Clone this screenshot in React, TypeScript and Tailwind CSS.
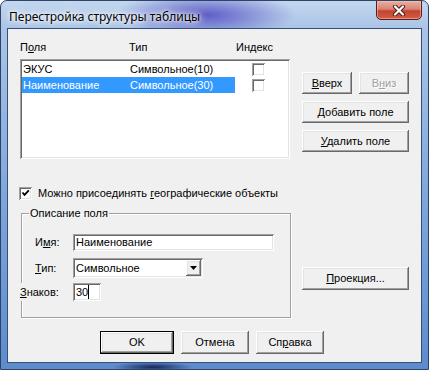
import React from 'react'

const raised =
  'bg-[#f0f0f0] shadow-[inset_-1px_-1px_0_#696969,inset_1px_1px_0_#ffffff,inset_-2px_-2px_0_#a0a0a0,inset_2px_2px_0_#e3e3e3]'
const sunken =
  'bg-white shadow-[inset_1px_1px_0_#a0a0a0,inset_-1px_-1px_0_#ffffff,inset_2px_2px_0_#696969,inset_-2px_-2px_0_#e3e3e3]'

function Btn({ children, w, h = 'h-[22px]', def, disabled }: { children: React.ReactNode; w: string; h?: string; def?: boolean; disabled?: boolean }) {
  const inner = (
    <div className={`${raised} w-full h-full flex items-center justify-center ${disabled ? 'text-[#a0a0a0] [text-shadow:1px_1px_0_#fff]' : ''}`}>
      <span>{children}</span>
    </div>
  )
  if (def) {
    return <div className={`${w} ${h} border border-black shrink-0`}>{inner}</div>
  }
  return <div className={`${w} ${h} shrink-0`}>{inner}</div>
}

function Check({ checked }: { checked?: boolean }) {
  return (
    <div className={`${sunken} w-[13px] h-[13px] shrink-0 flex items-center justify-center`}>
      {checked && (
        <svg width="9" height="9" viewBox="0 0 9 9">
          <path d="M1.5 3.5 L3.5 5.8 L7.8 1.3" fill="none" stroke="#000" strokeWidth="1.9" />
        </svg>
      )}
    </div>
  )
}

const U = ({ children }: { children: React.ReactNode }) => <span className="underline underline-offset-[1px]">{children}</span>

export default function App() {
  return (
    <div className="w-[429px] h-[370px] font-['Liberation_Sans',Arial,sans-serif] text-[11px] leading-[13px] text-black">
      <div className="w-full h-full flex flex-col rounded-t-[7px] border border-[#2c4466] overflow-hidden bg-[radial-gradient(ellipse_90px_24px_at_205px_14px,rgba(72,64,190,0.8),transparent),radial-gradient(ellipse_40px_5px_at_152px_366px,#16255a,transparent),linear-gradient(180deg,#c3d7ef_0px,#aac4e6_28px,#7ea6da_200px,#5d8bcc_100%)]">
        {/* title bar */}
        <div className="h-[27px] flex items-start justify-between">
          <span className="pl-[8px] pt-[8px] text-[12px] leading-[15px] font-['Noto_Sans',sans-serif] [text-shadow:0_0_6px_#fff,0_0_10px_#fff,0_0_3px_#fff]">
            Перестройка структуры таблицы
          </span>
          <div className="mr-[6px] -mt-[1px] w-[46px] h-[20px] rounded-b-[5px] border border-[#5c1f18] flex items-center justify-center bg-[linear-gradient(180deg,#eab0a2_0%,#d98474_45%,#c4442f_55%,#d35d44_100%)] shadow-[inset_0_0_0_1px_rgba(255,200,190,0.5)]">
            <svg width="14" height="11" viewBox="0 0 14 11">
              <path d="M3 1.5 L11 9.5 M11 1.5 L3 9.5" stroke="#4a1812" strokeWidth="4" strokeLinecap="round" />
              <path d="M3 1.5 L11 9.5 M11 1.5 L3 9.5" stroke="#fff" strokeWidth="2.2" strokeLinecap="round" />
            </svg>
          </div>
        </div>

        {/* client area */}
        <div className="mx-[6px] mb-[6px] flex-1 border border-[#34507a] bg-[#f0f0f0] pl-[12px] flex flex-col">
          {/* list header */}
          <div className="mt-[12px] h-[13px] flex">
            <span className="w-[109px]">П<U>о</U>ля</span>
            <span className="w-[107px]">Тип</span>
            <span>Индекс</span>
          </div>

          <div className="mt-[5px] flex items-start">
            <div className={`${sunken} w-[270px] h-[100px] p-[2px] flex flex-col`}>
              <div className="h-[16px] flex items-center">
                <div className="w-[213px] h-full flex items-center">
                  <span className="w-[108px] pl-px">ЭКУС</span>
                  <span>Символьное(10)</span>
                </div>
                <div className="ml-[17px]"><Check /></div>
              </div>
              <div className="h-[16px] flex items-center">
                <div className="w-[213px] h-full flex items-center bg-[#3399ff] text-white">
                  <span className="w-[108px] pl-px">Наименование</span>
                  <span>Символьное(30)</span>
                </div>
                <div className="ml-[17px]"><Check /></div>
              </div>
            </div>

            <div className="ml-[12px] mt-[13px] flex flex-col gap-[7px]">
              <div className="flex gap-[7px]">
                <Btn w="w-[50px]"><U>В</U>верх</Btn>
                <Btn w="w-[50px]" disabled>В<U>н</U>из</Btn>
              </div>
              <Btn w="w-[107px]"><U>Д</U>обавить поле</Btn>
              <Btn w="w-[107px]"><U>У</U>далить поле</Btn>
            </div>
          </div>

          <div className="mt-[28px] flex items-center gap-[6px] -ml-[1px]">
            <Check checked />
            <span>Можно присоединять <U>г</U>еографические объекты</span>
          </div>

          <div className="mt-[7px] flex items-start">
            <fieldset className="ml-[1px] w-[270px] h-[111px] border border-[#a0a0a0] shadow-[1px_1px_0_#fff,inset_1px_1px_0_#fff] pt-[14px] flex flex-col">
              <legend className="ml-[7px] px-[1px]">Описание поля</legend>
              <div className="flex items-center h-[17px] pl-[13px]">
                <span className="w-[38px]">И<U>м</U>я:</span>
                <div className={`${sunken} w-[201px] h-full flex items-center pl-[3px]`}>Наименование</div>
              </div>
              <div className="mt-[7px] flex items-center h-[20px] pl-[13px]">
                <span className="w-[38px]"><U>Т</U>ип:</span>
                <div className={`${sunken} w-[130px] h-full flex items-center justify-between p-[2px] pl-[3px]`}>
                  <span>Символьное</span>
                  <div className={`${raised} w-[15px] h-[16px] flex items-center justify-center`}>
                    <svg width="7" height="4" viewBox="0 0 7 4">
                      <path d="M0 0 H7 L3.5 4 Z" fill="#000" />
                    </svg>
                  </div>
                </div>
              </div>
              <div className="mt-[5px] flex items-center h-[18px] -ml-[2px]">
                <span className="w-[53px] h-full flex items-center bg-[#f0f0f0]"><U>З</U>наков:</span>
                <div className={`${sunken} w-[28px] h-full flex items-center pl-[3px]`}>
                  <span>30</span>
                  <span className="w-[1px] h-[14px] bg-black" />
                </div>
              </div>
            </fieldset>
            <div className="ml-[11px] mt-[60px]">
              <Btn w="w-[107px]" h="h-[23px]"><U>П</U>роекция...</Btn>
            </div>
          </div>

          <div className="mt-[13px] ml-[80px] flex gap-[7px]">
            <Btn w="w-[74px]" h="h-[23px]" def>OK</Btn>
            <Btn w="w-[68px]" h="h-[23px]">Отмена</Btn>
            <Btn w="w-[68px]" h="h-[23px]">Сп<U>р</U>авка</Btn>
          </div>
        </div>
      </div>
    </div>
  )
}
